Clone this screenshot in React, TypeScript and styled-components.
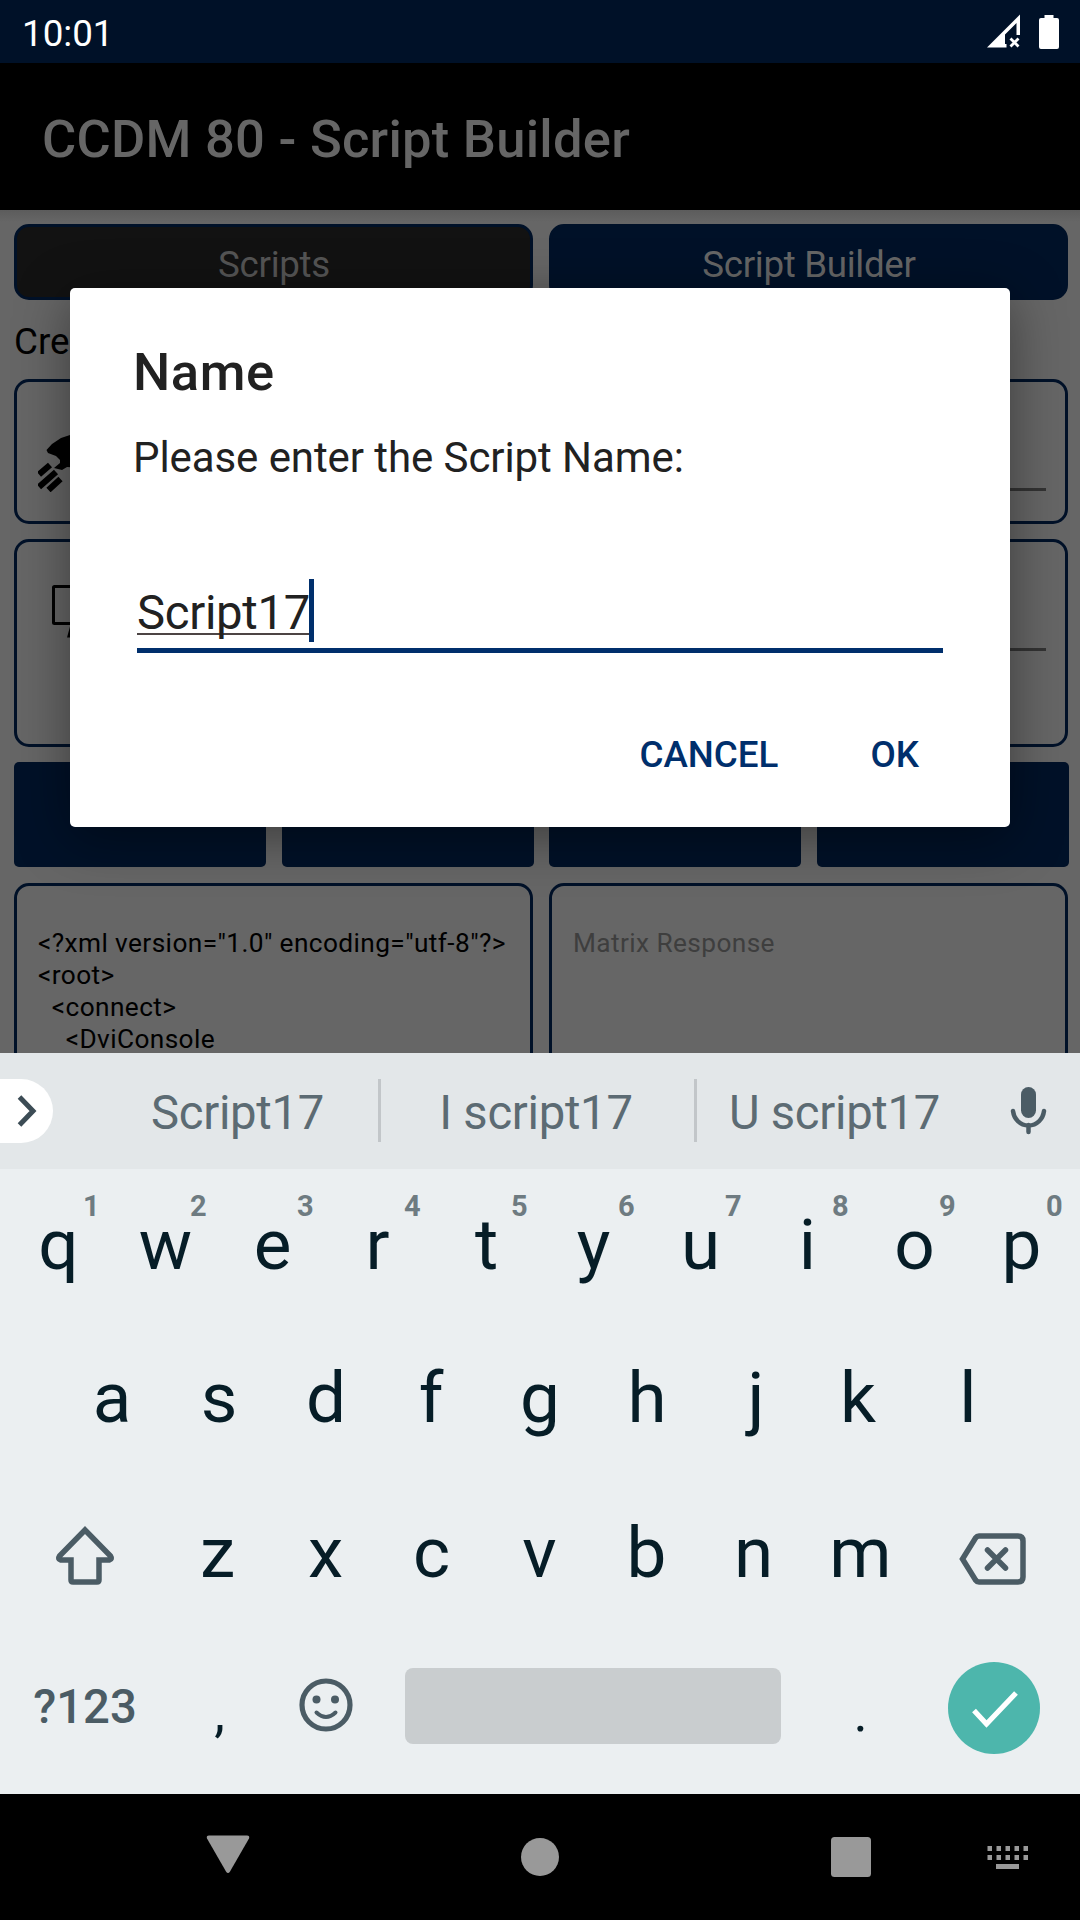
import React from "react";
import styled, { createGlobalStyle } from "styled-components";

const NAVY = "#001128";
const ACCENT = "#002f6c";
const GREY_ICON = "#4b5c65";

const GlobalStyle = createGlobalStyle`
  * { box-sizing: border-box; }
  body { margin: 0; background: #000; }
`;

const Screen = styled.div`
  position: relative;
  display: flex;
  flex-direction: column;
  width: 1080px;
  height: 1920px;
  overflow: hidden;
  font-family: Roboto, "Noto Sans", sans-serif;
  background: #000;
`;

const StatusBar = styled.header`
  display: flex;
  align-items: center;
  justify-content: space-between;
  height: 63px;
  flex: none;
  padding: 0 21px 0 22px;
  background: ${NAVY};
  color: #fff;
`;

const Clock = styled.span`
  padding-top: 4px;
  font-size: 36.75px;
  line-height: 43px;
`;

const StatusIcons = styled.div`
  display: flex;
  gap: 18px;
`;

const AppBar = styled.div`
  display: flex;
  align-items: center;
  height: 147px;
  flex: none;
  padding: 5px 42px 0;
  background: #000;
  color: #666;
  font-size: 52.5px;
  font-weight: 500;
  letter-spacing: 0.25px;
  white-space: nowrap;
`;

const Content = styled.main`
  display: flex;
  flex-direction: column;
  height: 843px;
  flex: none;
  padding: 14px 11px 0 14px;
  overflow: hidden;
  background: linear-gradient(#5c5c5c, #666 12px);
`;

const Tabs = styled.div`
  display: grid;
  grid-template-columns: 519px 519px;
  column-gap: 16px;
`;

const Tab = styled.div<{ $selected?: boolean }>`
  display: flex;
  align-items: center;
  justify-content: center;
  height: 76px;
  padding: 4px 0 0 1px;
  border: 3px solid ${NAVY};
  border-radius: 15px;
  background: ${(p) => (p.$selected ? NAVY : "#121212")};
  color: ${(p) => (p.$selected ? "#666" : "#555")};
  font-size: 36.75px;
  letter-spacing: -0.33px;
`;

const Label = styled.div`
  height: 79px;
  padding-top: 3px;
  line-height: 77px;
  font-size: 36.75px;
  color: #000;
`;

const Card = styled.section<{ $height: number }>`
  display: flex;
  justify-content: space-between;
  width: 1054px;
  height: ${(p) => p.$height}px;
  flex: none;
  margin-bottom: 15px;
  padding: 0 19px 0 21px;
  border: 3px solid ${NAVY};
  border-radius: 15px;
`;

const CardIcon = styled.svg<{ $top: number }>`
  margin-top: ${(p) => p.$top}px;
`;

const FieldLine = styled.div`
  width: 820px;
  height: 3px;
  margin-top: 106px;
  background: #333;
`;

const Actions = styled.div`
  display: grid;
  grid-template-columns: repeat(4, 252px);
  column-gap: 15.7px;
  margin-bottom: 16px;
`;

const Action = styled.div`
  height: 105px;
  border-radius: 5px;
  background: ${NAVY};
`;

const Panels = styled(Tabs)``;

const Panel = styled.pre<{ $hint?: boolean }>`
  height: 260px;
  margin: 0;
  padding: 41px 0 0 21px;
  border: 3px solid ${NAVY};
  border-radius: 15px;
  font-family: inherit;
  font-size: 26.25px;
  line-height: 32px;
  letter-spacing: 0.4px;
  color: ${(p) => (p.$hint ? "#3e3e3e" : "#000")};
`;

const Dialog = styled.div`
  position: absolute;
  left: 70px;
  top: 288px;
  display: flex;
  flex-direction: column;
  width: 940px;
  height: 539px;
  padding: 53px 63px 0;
  border-radius: 5px;
  background: #fff;
  color: #212121;
  box-shadow: 0 10px 54px rgba(0, 0, 0, 0.42);
`;

const DialogTitle = styled.h1`
  margin: 0;
  font-size: 52.5px;
  line-height: 62px;
  font-weight: 500;
  letter-spacing: 0.6px;
`;

const Message = styled.p`
  margin: 30px 0 0;
  font-size: 42px;
  line-height: 50px;
  letter-spacing: -0.08px;
`;

const InputRow = styled.div`
  display: flex;
  align-items: flex-start;
  width: 806px;
  height: 74px;
  margin: 96px 0 0 4px;
  border-bottom: 5px solid ${ACCENT};
`;

const Composing = styled.span`
  height: 56px;
  padding-top: 7px;
  border-bottom: 2px solid #4c4444;
  font-size: 47.25px;
  line-height: 55px;
  letter-spacing: -0.3px;
`;

const Caret = styled.span`
  width: 5px;
  height: 63px;
  margin-left: -1px;
  background: ${ACCENT};
`;

const DialogActions = styled.div`
  display: flex;
  justify-content: flex-end;
  gap: 92px;
  margin-top: 80px;
  padding-right: 28px;
`;

const TextButton = styled.button`
  padding: 0;
  border: 0;
  background: none;
  color: ${ACCENT};
  font: 500 36.75px/44px Roboto, "Noto Sans", sans-serif;
`;

const Suggestions = styled.div`
  display: flex;
  align-items: center;
  height: 116px;
  flex: none;
  background: #e3e7e9;
`;

const Expand = styled.div`
  display: flex;
  align-items: center;
  flex: none;
  width: 53px;
  height: 64px;
  margin-right: 44px;
  padding-left: 17px;
  border-radius: 0 32px 32px 0;
  background: #fff;
`;

const Suggestion = styled.div<{ $width: number; $trim?: number }>`
  flex: none;
  width: ${(p) => p.$width}px;
  padding-top: 3px;
  padding-right: ${(p) => p.$trim ?? 0}px;
  text-align: center;
  white-space: nowrap;
  font-size: 47.25px;
  letter-spacing: -0.3px;
  color: #5c6b73;
`;

const Divider = styled.div`
  flex: none;
  width: 3px;
  height: 63px;
  margin-bottom: 1px;
  background: #c2c6c9;
`;

const Keyboard = styled.div`
  display: flex;
  flex-direction: column;
  height: 625px;
  flex: none;
  background: #ebeff1;
`;

const KeyRow = styled.div<{ $height: number; $pad: number }>`
  display: flex;
  align-items: center;
  height: ${(p) => p.$height}px;
  padding: 0 ${(p) => p.$pad}px;
`;

const Key = styled.div<{ $width?: number; $drop?: number; $nudge?: number }>`
  position: relative;
  display: flex;
  align-items: center;
  justify-content: center;
  width: ${(p) => p.$width ?? 107}px;
  height: 84px;
  padding-top: ${(p) => p.$drop ?? 0}px;
  padding-left: ${(p) => Math.max(0, 2 * (p.$nudge ?? 0))}px;
  padding-right: ${(p) => Math.max(0, -2 * (p.$nudge ?? 0))}px;
  font-size: 71px;
  color: #061d27;
`;

const Digit = styled.span`
  position: absolute;
  top: -13px;
  left: 78px;
  font-size: 29px;
  line-height: 34px;
  font-weight: 700;
  color: #6e7b81;
`;

const SymbolsKey = styled(Key)`
  font-size: 47.25px;
  font-weight: 500;
  color: ${GREY_ICON};
`;

const PunctuationKey = styled(Key)`
  font-size: 54px;
`;

const SpaceBar = styled.div`
  width: 376px;
  height: 76px;
  margin: 0 26px;
  border-radius: 8px;
  background: #c9cdcf;
`;

const Enter = styled.div`
  display: flex;
  align-items: center;
  justify-content: center;
  width: 92px;
  height: 92px;
  padding: 4px 0 0 2px;
  border-radius: 50%;
  background: #4db6ac;
`;

const NavBar = styled.nav`
  display: grid;
  grid-template-columns: 314px 311px 156px 42px;
  height: 126px;
  flex: none;
  padding: 40px 0 0 206px;
  background: #000;
`;

const ROW_ONE = "qwertyuiop".split("");
const ROW_TWO = "asdfghjkl".split("");
const ROW_THREE = "zxcvbnm".split("");

// Optical centring of glyphs with uneven side bearings.
const NUDGE: Record<string, number> = { r: -2, k: -3, j: 2, f: -2, z: -1, c: -1 };

const XML = `<?xml version="1.0" encoding="utf-8"?>
<root>
  <connect>
    <DviConsole`;

export default function App() {
  return (
    <Screen>
      <GlobalStyle />
      <StatusBar>
        <Clock>10:01</Clock>
        <StatusIcons>
          <svg width="34" height="36" viewBox="0 0 34 36" fill="#fff">
            <path d="M0 33.500 33 .5V21h-3.500V9L18 20.500V30h1.500v3.500z" />
            <path d="m23.500 24.500 8 8m0-8-8 8" stroke="#fff" strokeWidth="2.800" />
          </svg>
          <svg width="20" height="36" viewBox="0 0 20 36" fill="#fff">
            <path d="M5.500 1h9v3H18q2 0 2 2v27q0 2-2 2H2q-2 0-2-2V6q0-2 2-2h3.500z" />
          </svg>
        </StatusIcons>
      </StatusBar>
      <AppBar>CCDM 80 - Script Builder</AppBar>
      <Content>
        <Tabs>
          <Tab>Scripts</Tab>
          <Tab $selected>Script Builder</Tab>
        </Tabs>
        <Label>Create</Label>
        <Card $height={145}>
          <CardIcon $top={50} width="60" height="60" viewBox="0 0 60 60">
            <path d="M8.500 18 14 12 23 6l9-3 14-1v34l-17-1-5 3-8-2 6-5V28l-4-4-8-3z" />
            <path d="M1 42.500 12 33M1 55l17-15M10.500 58l12-11" stroke="#000" strokeWidth="6.200" />
          </CardIcon>
          <FieldLine />
        </Card>
        <Card $height={208}>
          <CardIcon $top={42} width="72" height="60" viewBox="0 0 72 60" fill="none" stroke="#000" strokeWidth="3">
            <rect x="15.500" y="2.500" width="54" height="37" rx="1" />
            <path d="m34 41-3 11h22l-3-11" />
          </CardIcon>
          <FieldLine />
        </Card>
        <Actions>
          <Action />
          <Action />
          <Action />
          <Action />
        </Actions>
        <Panels>
          <Panel>{XML}</Panel>
          <Panel $hint>Matrix Response</Panel>
        </Panels>
      </Content>

      <Suggestions>
        <Expand>
          <svg width="20" height="32" viewBox="0 0 20 32" fill="none">
            <path d="m2.500 2 13.500 14-13.500 14" stroke="#3c4c55" strokeWidth="5" />
          </svg>
        </Expand>
        <Suggestion $width={281}>Script17</Suggestion>
        <Divider />
        <Suggestion $width={313} $trim={3}>I script17</Suggestion>
        <Divider />
        <Suggestion $width={275}>U script17</Suggestion>
        <svg width="108" height="50" viewBox="972 1086 108 50" fill="none">
          <rect x="1021" y="1087" width="15" height="31" rx="7.500" fill={GREY_ICON} />
          <path
            d="M1013 1111c1 8 7 14.500 15.500 14.500s14.500-6.500 15.500-14.500M1028.500 1125v7"
            stroke={GREY_ICON}
            strokeWidth="4.500"
            strokeLinecap="round"
          />
        </svg>
      </Suggestions>

      <Keyboard>
        <KeyRow $height={150} $pad={5}>
          {ROW_ONE.map((letter, i) => (
            <Key key={letter} $nudge={NUDGE[letter]}>
              {letter}
              <Digit>{(i + 1) % 10}</Digit>
            </Key>
          ))}
        </KeyRow>
        <KeyRow $height={156} $pad={58.5}>
          {ROW_TWO.map((letter) => (
            <Key key={letter} $nudge={NUDGE[letter]}>{letter}</Key>
          ))}
        </KeyRow>
        <KeyRow $height={154} $pad={5}>
          <Key $width={160} $drop={5}>
            <svg width="62" height="60" viewBox="0 0 62 60" fill="none" stroke={GREY_ICON} strokeWidth="5.500">
              <path d="M31 5 5.500 31q-2 3 1 4H17v20q0 2 2 2h24q2 0 2-2V35h10.500q3-1 1-4z" />
            </svg>
          </Key>
          {ROW_THREE.map((letter) => (
            <Key key={letter} $nudge={NUDGE[letter]}>{letter}</Key>
          ))}
          <Key $width={161} $drop={15} $nudge={-1.5}>
            <svg width="68" height="56" viewBox="0 0 68 56" fill="none" stroke={GREY_ICON} strokeWidth="5.500" strokeLinecap="round">
              <path d="M20 4h39q5 0 5 5v36q0 5-5 5H20q-2 0-3.500-2L3.500 27 16.500 6Q18 4 20 4z" />
              <path d="m28.500 18 18 18m0-18-18 18" />
            </svg>
          </Key>
        </KeyRow>
        <KeyRow $height={154} $pad={5}>
          <SymbolsKey $width={160} $drop={2}>?123</SymbolsKey>
          <PunctuationKey $drop={13} $nudge={1}>,</PunctuationKey>
          <Key>
            <svg width="54" height="56" viewBox="0 0 54 56" fill="none" stroke={GREY_ICON}>
              <circle cx="27" cy="27" r="24" strokeWidth="5.200" />
              <g fill={GREY_ICON} stroke="none">
                <circle cx="17.500" cy="21.500" r="4" />
                <circle cx="36" cy="21.500" r="4" />
              </g>
              <path d="M17.500 34.500q9.500 9 19 0" strokeWidth="4" strokeLinecap="round" />
            </svg>
          </Key>
          <SpaceBar />
          <PunctuationKey $drop={13}>.</PunctuationKey>
          <Key $width={160} $drop={3}>
            <Enter>
              <svg width="50" height="42" viewBox="0 0 50 42" fill="none">
                <path d="M4 21.500 16.500 35 46 4" stroke="#fff" strokeWidth="5.200" />
              </svg>
            </Enter>
          </Key>
        </KeyRow>
      </Keyboard>

      <NavBar>
        <svg width="44" height="48" viewBox="206 1834 44 48" fill="#999">
          <path d="M209 1835.500h38q3 0 2 3l-19 33q-2 3-4 0l-19-33q-1-3 2-3z" />
        </svg>
        <svg width="40" height="48" viewBox="520 1834 40 48" fill="#999">
          <circle cx="540" cy="1857" r="19" />
        </svg>
        <svg width="40" height="48" viewBox="831 1834 40 48" fill="#999">
          <rect x="831" y="1837" width="40" height="40" rx="3.500" />
        </svg>
        <svg width="42" height="48" viewBox="987 1834 42 48" fill="#999">
          {[0, 1, 2, 3, 4].map((n) => (
            <React.Fragment key={n}>
              <rect x={987.5 + n * 9} y="1846" width="4.500" height="5" />
              <rect x={987.5 + n * 9} y="1855" width="4.500" height="5" />
            </React.Fragment>
          ))}
          <rect x="996" y="1864" width="23" height="5" />
        </svg>
      </NavBar>

      <Dialog>
        <DialogTitle>Name</DialogTitle>
        <Message>Please enter the Script Name:</Message>
        <InputRow>
          <Composing>Script17</Composing>
          <Caret />
        </InputRow>
        <DialogActions>
          <TextButton>CANCEL</TextButton>
          <TextButton>OK</TextButton>
        </DialogActions>
      </Dialog>
    </Screen>
  );
}
